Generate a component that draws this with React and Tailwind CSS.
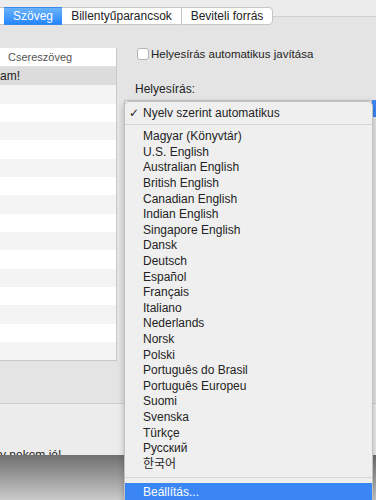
const languages = [
  'Magyar (Könyvtár)',
  'U.S. English',
  'Australian English',
  'British English',
  'Canadian English',
  'Indian English',
  'Singapore English',
  'Dansk',
  'Deutsch',
  'Español',
  'Français',
  'Italiano',
  'Nederlands',
  'Norsk',
  'Polski',
  'Português do Brasil',
  'Português Europeu',
  'Suomi',
  'Svenska',
  'Türkçe',
  'Русский',
  '한국어',
];

const rows = Array.from({ length: 16 }, (_, i) => i);

const App = () => {
  return (
    <div className="relative w-[376px] h-[500px] overflow-hidden bg-[#ececec] font-['Liberation_Sans','Noto_Sans_CJK_KR',sans-serif] text-[12px] text-[#232323]">
      {/* Window */}
      <div className="flex flex-col h-[455px]">
        <div className="mt-[16px] h-[388px] border-t border-b border-[#cfcfcf] bg-[#e4e4e4] flex flex-col">
          {/* Tabs */}
          <div className="-mt-[10px] flex h-[18px] leading-[16px]">
            <div className="w-[4px] bg-white border-y border-[#c6c6c6]" />
            <div className="w-[58px] flex items-center justify-center text-white bg-gradient-to-b from-[#6ab2fa] to-[#2286fa] border-y border-[#3b88e8]">
              Szöveg
            </div>
            <div className="w-[119px] flex items-center justify-center bg-white border-y border-[#c6c6c6]">
              Billentyűparancsok
            </div>
            <div className="w-[92px] flex items-center justify-center bg-white border border-[#c6c6c6] rounded-r-[4px]">
              Beviteli forrás
            </div>
          </div>

          {/* Content */}
          <div className="mt-[23px] flex flex-1">
            {/* Replacement table */}
            <div className="w-[117px] self-start bg-white border-r border-b border-[#c8c8c8]">
              <div className="h-[19px] flex items-center pl-[8px] text-[11px] text-[#555] border-b border-[#e2e2e2]">
                Csereszöveg
              </div>
              {rows.map((i) => (
                <div
                  key={i}
                  className={`h-[18.33px] flex items-center ${
                    i === 0 ? 'bg-[#dcdcdc]' : i % 2 === 1 ? 'bg-[#f4f4f4]' : 'bg-white'
                  }`}
                >
                  {i === 0 && <span className="text-[12px] text-[#222]">am!</span>}
                </div>
              ))}
            </div>

            {/* Spelling options */}
            <div className="flex-1 flex flex-col">
              <div className="flex items-center h-[12px] pl-[20px]">
                <div className="w-[12px] h-[12px] bg-white border border-[#b3b3b3] rounded-[3px]" />
                <span className="ml-[2px] text-[11.5px] leading-[14px]">Helyesírás automatikus javítása</span>
              </div>
              <div className="mt-[22px] pl-[18px] leading-[14px]">Helyesírás:</div>
              <div className="mt-[4px] ml-[7px] h-[17px] flex">
                <div className="flex-1 bg-white border border-[#c6c6c6]" />
                <div className="w-[4px] bg-[#3b86f5]" />
              </div>
            </div>
          </div>
        </div>

        {/* Window bottom strip */}
        <div className="flex-1 flex flex-col justify-end overflow-hidden">
          <div className="-mb-[7px] leading-[14px] text-[12px] text-[#1f1f1f]">y nekem jó!</div>
        </div>
      </div>

      {/* Window shadow */}
      <div className="h-[45px] bg-gradient-to-b from-[#707070] to-[#cbcbcb]" />

      {/* Language popup menu */}
      <div className="absolute left-[124px] top-[101px] w-[249px] h-[420px] bg-[#efefef] border border-[#c2c2c2] rounded-t-[5px] shadow-[0_2px_6px_rgba(0,0,0,0.25)]">
        <div className="relative mt-[2px] h-[17px] flex items-center pl-[18px]">
          <span className="absolute left-[4px] font-['DejaVu_Sans',sans-serif] text-[12px]">✓</span>
          Nyelv szerint automatikus
        </div>
        <div className="my-[3px] h-px bg-[#d6d6d6]" />
        <div className="mt-[4px]">
          {languages.map((lang) => (
            <div key={lang} className="h-[15.6px] flex items-center pl-[18px] leading-[15px]">
              {lang}
            </div>
          ))}
        </div>
        <div className="mt-[5px] mb-[5px] h-px bg-[#d6d6d6]" />
        <div className="h-[17px] flex items-center pl-[18px] bg-[#3b86f5] text-white">Beállítás...</div>
      </div>
    </div>
  );
};

export default App;
